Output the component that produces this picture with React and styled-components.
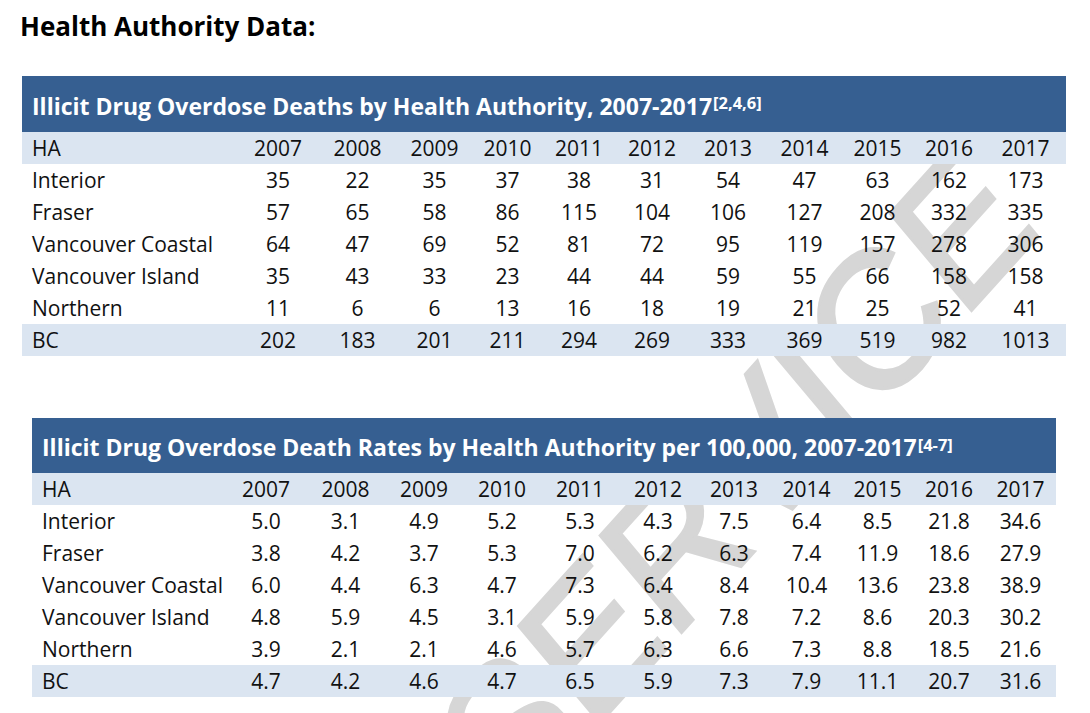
import React from 'react'
import styled, { createGlobalStyle } from 'styled-components'

const GlobalStyle = createGlobalStyle`
    html, body {
        margin: 0;
        padding: 0;
        background: #ffffff;
    }
    body {
        font-family: 'Open Sans', 'Noto Sans', sans-serif;
        color: #111111;
    }
`

const Page = styled.div`
    position: relative;
    width: 1090px;
    height: 713px;
    overflow: hidden;
    padding: 10px 0 0 20px;
    box-sizing: border-box;
`

const Heading = styled.h1`
    margin: 0;
    font-size: 26px;
    line-height: 32px;
    font-weight: 700;
    color: #000000;
`

const Watermark = styled.div`
    position: absolute;
    left: 1002px;
    top: 182px;
    width: 0;
    height: 0;
    transform: scaleY(1.15) rotate(-44deg);
    z-index: 0;
    pointer-events: none;
`

const WatermarkText = styled.span`
    position: absolute;
    right: 0;
    top: -85px;
    font-family: 'Liberation Sans', Arial, sans-serif;
    font-size: 170px;
    line-height: 170px;
    white-space: nowrap;
    color: #d6d6d6;
    -webkit-text-stroke: 3px #d6d6d6;
`

const Table = styled.section`
    position: relative;
    z-index: 1;
    width: ${(p) => p.$width}px;
    margin-left: ${(p) => p.$offset}px;
    margin-top: ${(p) => p.$gap}px;
`

const TitleBar = styled.div`
    display: flex;
    align-items: center;
    height: ${(p) => p.$height}px;
    padding: 3px 10px 0;
    box-sizing: border-box;
    background: #365f91;
    color: #ffffff;
    font-size: 23px;
    font-weight: 700;
    white-space: nowrap;
`

const Ref = styled.sup`
    font-size: 16.5px;
    position: relative;
    top: -3px;
    margin-left: 1px;
`

const Row = styled.div`
    display: grid;
    grid-template-columns: ${(p) => p.$cols};
    height: 32px;
    align-items: center;
    background: ${(p) => (p.$shaded ? '#dbe5f1' : 'transparent')};
    font-size: 21px;
`

const Label = styled.div`
    padding-left: 10px;
    white-space: nowrap;
`

const Cell = styled.div`
    text-align: center;
`

function DataTable({ title, refs, cols, head, rows, width, offset, gap, titleHeight }) {
    return (
        <Table $width={width} $offset={offset} $gap={gap}>
            <TitleBar $height={titleHeight}>
                {title}
                <Ref>{refs}</Ref>
            </TitleBar>
            <Row $cols={cols} $shaded>
                <Label>HA</Label>
                {head.map((y) => (
                    <Cell key={y}>{y}</Cell>
                ))}
            </Row>
            {rows.map((r) => (
                <Row key={r[0]} $cols={cols} $shaded={r[0] === 'BC'}>
                    <Label>{r[0]}</Label>
                    {r.slice(1).map((v, i) => (
                        <Cell key={i}>{v}</Cell>
                    ))}
                </Row>
            ))}
        </Table>
    )
}

const years = ['2007', '2008', '2009', '2010', '2011', '2012', '2013', '2014', '2015', '2016', '2017']

const deaths = [
    ['Interior', 35, 22, 35, 37, 38, 31, 54, 47, 63, 162, 173],
    ['Fraser', 57, 65, 58, 86, 115, 104, 106, 127, 208, 332, 335],
    ['Vancouver Coastal', 64, 47, 69, 52, 81, 72, 95, 119, 157, 278, 306],
    ['Vancouver Island', 35, 43, 33, 23, 44, 44, 59, 55, 66, 158, 158],
    ['Northern', 11, 6, 6, 13, 16, 18, 19, 21, 25, 52, 41],
    ['BC', 202, 183, 201, 211, 294, 269, 333, 369, 519, 982, 1013],
]

const rates = [
    ['Interior', '5.0', '3.1', '4.9', '5.2', '5.3', '4.3', '7.5', '6.4', '8.5', '21.8', '34.6'],
    ['Fraser', '3.8', '4.2', '3.7', '5.3', '7.0', '6.2', '6.3', '7.4', '11.9', '18.6', '27.9'],
    ['Vancouver Coastal', '6.0', '4.4', '6.3', '4.7', '7.3', '6.4', '8.4', '10.4', '13.6', '23.8', '38.9'],
    ['Vancouver Island', '4.8', '5.9', '4.5', '3.1', '5.9', '5.8', '7.8', '7.2', '8.6', '20.3', '30.2'],
    ['Northern', '3.9', '2.1', '2.1', '4.6', '5.7', '6.3', '6.6', '7.3', '8.8', '18.5', '21.6'],
    ['BC', '4.7', '4.2', '4.6', '4.7', '6.5', '5.9', '7.3', '7.9', '11.1', '20.7', '31.6'],
]

export default function App() {
    return (
        <>
            <GlobalStyle />
            <Page>
                <Watermark>
                    <WatermarkText>CORONERS SERVICE</WatermarkText>
                </Watermark>
                <Heading>Health Authority Data:</Heading>
                <DataTable
                    title="Illicit Drug Overdose Deaths by Health Authority, 2007-2017"
                    refs="[2,4,6]"
                    cols="216px 80px 79px 75px 71px 72px 74px 78px 75px 71px 72px 81px"
                    head={years}
                    rows={deaths}
                    width={1044}
                    offset={2}
                    gap={34}
                    titleHeight={56}
                />
                <DataTable
                    title="Illicit Drug Overdose Death Rates by Health Authority per 100,000, 2007-2017"
                    refs="[4-7]"
                    cols="194px 80px 79px 78px 78px 78px 78px 74px 71px 71px 72px 71px"
                    head={years}
                    rows={rates}
                    width={1024}
                    offset={12}
                    gap={62}
                    titleHeight={55}
                />
            </Page>
        </>
    )
}
